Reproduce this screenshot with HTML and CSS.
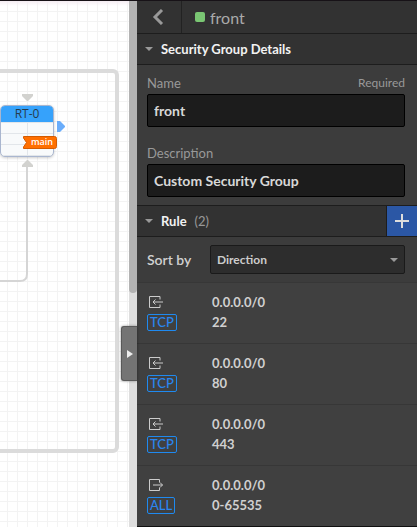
FILE: index.html
```html
<!DOCTYPE html>
<html lang="en">
<head>
<meta charset="utf-8">
<title>Security group</title>
<link rel="stylesheet" href="styles.css">
</head>
<body>
<svg class="sprites" aria-hidden="true">
  <symbol id="inbound" viewBox="0 0 16 12">
    <path d="M12 3.5V.5H1.500V11.500H12V8.500M15 6H5M7.500 3.500L5 6l2.500 2.500" fill="none" stroke="currentColor"/>
  </symbol>
  <symbol id="outbound" viewBox="0 0 16 12">
    <path d="M11.500 3.500V.5H1.500V11.500H11.500V8.500M5 6H14.500M12 3.500L14.500 6 12 8.500" fill="none" stroke="currentColor"/>
  </symbol>
</svg>
<main class="canvas">
  <div class="zone"></div>
  <svg class="wires" width="80" height="300" aria-hidden="true">
    <path d="M27 166V274Q27 281 20 281H0" fill="none" stroke="#d5d5d5" stroke-width="2"/>
    <path d="M22 94H33V96L28 101H27L22 96Z M22 167V165L27 160H28L33 165V167Z" fill="#d2d2cf"/>
    <path d="M57 121H60L65 126V127L60 132H57Z" fill="#6aadfb"/>
  </svg>
  <div class="node">
    <div class="node-name">RT-0</div>
    <div class="node-body"></div>
  </div>
  <div class="tag">
    <svg width="34" height="13" aria-hidden="true"><path d="M.5.5H31.500Q33.500.5 33.500 2.500V10.500Q33.500 12.500 31.500 12.500H.5V11L3.500 6.500.5 2Z" fill="#ff6f00" stroke="#d45b00"/></svg>
    <span>main</span>
  </div>
</main>
<div class="scroll"><div class="thumb"></div>
  <button class="collapse" aria-label="Collapse panel"><svg width="6" height="8"><path d="M0 0L6 4 0 8Z" fill="#eee"/></svg></button>
</div>
<aside class="panel">
  <header class="top">
    <button class="back" aria-label="Back"><svg width="12" height="16"><path d="M10 1L3 8l7 7" fill="none" stroke="#999" stroke-width="3"/></svg></button>
    <h1><i class="swatch"></i>front</h1>
  </header>
  <h2 class="section"><i class="caret"></i>Security Group Details</h2>
  <form class="details">
    <div class="field">
      <div class="caption"><label for="name">Name</label><span class="required">Required</span></div>
      <input id="name" type="text" value="front">
    </div>
    <div class="field">
      <div class="caption"><label for="desc">Description</label></div>
      <input id="desc" type="text" value="Custom Security Group">
    </div>
  </form>
  <div class="section">
    <i class="caret"></i><h2>Rule</h2><span class="count">(2)</span>
    <button class="add" aria-label="Add rule"><svg width="14" height="14"><path d="M7 0V14M0 7H14" stroke="#ddd" stroke-width="2"/></svg></button>
  </div>
  <div class="sort">
    <label for="sort">Sort by</label>
    <div class="picker"><select id="sort"><option>Direction</option></select><i class="caret"></i></div>
  </div>
  <ul class="rules">
    <li><div class="kind"><svg class="way"><use href="#inbound"/></svg><span class="proto">TCP</span></div><div>0.0.0.0/0<br>22</div></li>
    <li><div class="kind"><svg class="way"><use href="#inbound"/></svg><span class="proto">TCP</span></div><div>0.0.0.0/0<br>80</div></li>
    <li><div class="kind"><svg class="way"><use href="#inbound"/></svg><span class="proto">TCP</span></div><div>0.0.0.0/0<br>443</div></li>
    <li><div class="kind"><svg class="way"><use href="#outbound"/></svg><span class="proto">ALL</span></div><div>0.0.0.0/0<br>0-65535</div></li>
  </ul>
</aside>
</body>
</html>
```
FILE: styles.css
```css
* { box-sizing: border-box; }
body {
  margin: 0;
  min-height: 100vh;
  display: flex;
  border-top: 1px solid #171217;
  font-family: Lato, sans-serif;
  font-size: 14px;
  background: #fff;
}
button, input, select { font: inherit; }
button { border: 0; padding: 0; display: flex; align-items: center; justify-content: center; }
h1, h2, ul { margin: 0; padding: 0; font: inherit; }
.sprites { position: absolute; width: 0; height: 0; }

.canvas {
  position: relative;
  flex: 1;
  overflow: hidden;
  background:
    linear-gradient(#f5edf3, transparent 5px),
    linear-gradient(#f3f3f3 1px, transparent 1px) 0 0 / 10px 10px,
    linear-gradient(90deg, #f3f3f3 1px, transparent 1px) 7px 0 / 10px 10px,
    #fff;
}
.zone {
  position: absolute;
  top: 68px;
  left: -20px;
  width: 139px;
  height: 384px;
  border: 4px solid #dbdbdb;
  border-radius: 6px;
}
.wires { position: absolute; top: -1px; left: 0; }
.node {
  position: absolute;
  top: 104px;
  left: 0;
  width: 54px;
  height: 52px;
  border: 1px solid #a9b6cf;
  border-radius: 5px;
  overflow: hidden;
  box-shadow: 0 1px 3px #0003;
  background: #f8fafb;
}
.node-name {
  height: 16px;
  line-height: 16px;
  text-align: center;
  font-family: "Open Sans", sans-serif;
  font-size: 12px;
  color: #263b4b;
  background: #36a2fb;
}
.node-body {
  height: 34px;
  background:
    linear-gradient(#e2e6ea 1px, transparent 1px) 0 11px / 100% 11px,
    linear-gradient(90deg, #e2e6ea 1px, transparent 1px) 26px 0 / 40px 100%;
}
.tag { position: absolute; top: 135px; left: 23px; height: 13px; }
.tag svg { display: block; }
.tag span {
  position: absolute;
  inset: 0 0 0 4px;
  line-height: 12px;
  text-align: center;
  font-family: "Open Sans", sans-serif;
  font-size: 9px;
  font-weight: 600;
  color: #fff;
}

.scroll { position: relative; width: 8px; background: #dedede; }
.thumb { height: 292px; background: #b3b3b3; border-radius: 0 0 4px 4px; }
.collapse {
  position: absolute;
  top: 325px;
  right: 0;
  width: 16px;
  height: 55px;
  background: #747474;
  border: 1px solid #595959;
  border-right: 0;
  border-radius: 3px 0 0 3px;
  box-shadow: 0 0 3px #0006;
}

.panel { width: 280px; background: #3c3c3c; color: #d0d0d0; }
.top { display: flex; height: 33px; background: #323232; border-bottom: 1px solid #1d1d1d; }
.back { width: 45px; padding-right: 2px; background: none; border-right: 1px solid #222; }
.top h1 { display: flex; align-items: center; gap: 5px; padding-left: 13px; font-size: 16px; color: #aaa; }
.swatch { width: 10px; height: 10px; border-radius: 2px; background: #7ac673; }
.section {
  display: flex;
  align-items: center;
  height: 31px;
  padding-left: 8px;
  background: #323232;
  border-bottom: 1px solid #1d1d1d;
  font-size: 13px;
  font-weight: 700;
  color: #f2f2f2;
}
h2.section { font-size: 13px; font-weight: 700; }
.caret { border: 4px solid transparent; border-top-color: #999; border-bottom: 0; }
.section .caret { margin-right: 8px; }
.count { margin-left: 8px; font-weight: 400; color: #999; }
.add { width: 31px; height: 30px; margin-left: auto; background: #2b57a5; border-left: 1px solid #1d1d1d; }

.details { padding: 9px 12px 8px 10px; border-bottom: 1px solid #1d1d1d; display: grid; gap: 17px; }
.caption { display: flex; justify-content: space-between; height: 20px; line-height: 18px; font-size: 13px; color: #999; }
.required { font-size: 12px; }
.details input {
  display: block;
  width: 100%;
  height: 33px;
  padding: 0 6px;
  background: #1c1c1c;
  border: 1px solid #000;
  border-radius: 2px;
  color: #d8d8d8;
  font-weight: 700;
}
.sort { display: flex; align-items: center; height: 45px; padding: 0 12px 0 10px; }
.sort label { width: 63px; font-weight: 600; }
.picker { position: relative; flex: 1; }
.picker select {
  appearance: none;
  display: block;
  width: 100%;
  height: 29px;
  padding: 0 6px;
  font-size: 12px;
  font-weight: 700;
  color: #ccc;
  background: #2d2d2d;
  border: 1px solid #1a1a1a;
  border-radius: 2px;
}
.picker .caret { position: absolute; right: 7px; top: 13px; pointer-events: none; }
.rules { list-style: none; border-bottom: 1px solid #111; }
.rules li {
  display: grid;
  grid-template-columns: 65px 1fr;
  height: 61px;
  padding: 9px 10px;
  border-top: 1px solid #373737;
  background: #404040;
  line-height: 20px;
  font-size: 13px;
  font-weight: 700;
}
.kind { display: flex; flex-direction: column; align-items: flex-start; gap: 6px; padding-top: 4px; }
.way { width: 16px; height: 12px; color: #ccc; margin-left: 1px; }
.proto {
  height: 17px;
  padding: 0 2px;
  line-height: 15px;
  border: 1px solid #1f8af0;
  border-radius: 2px;
  color: #2a86f0;
  font-size: 13px;
  font-weight: 500;
}
```
